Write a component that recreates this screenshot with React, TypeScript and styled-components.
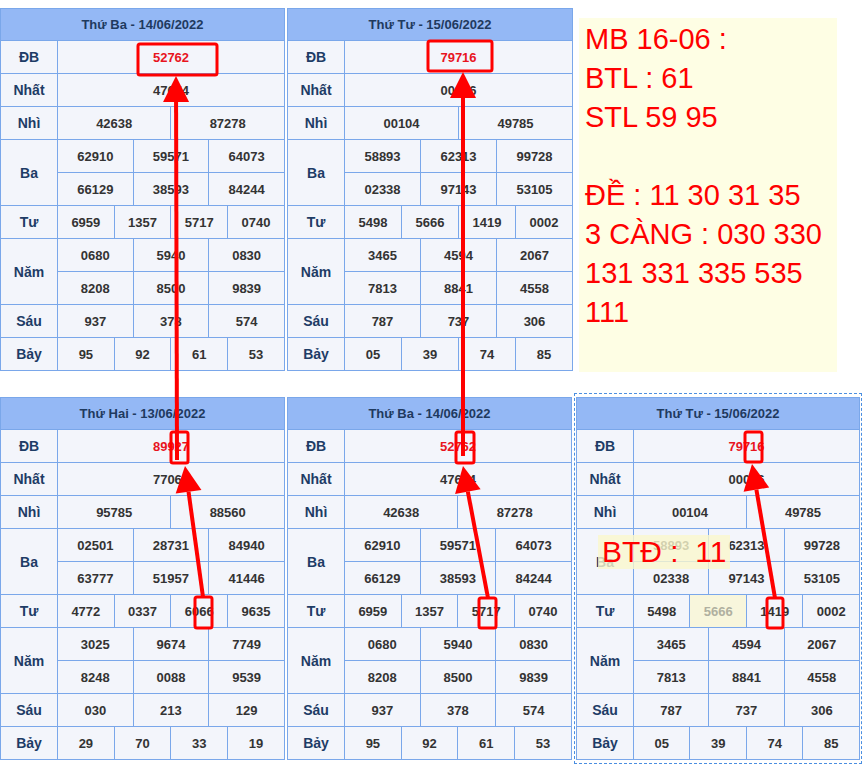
import React from "react";
import styled, { createGlobalStyle } from "styled-components";

const Global = createGlobalStyle`
  body { margin: 0; font-family: "Liberation Sans", Arial, sans-serif; background: #fff; }
`;

const Page = styled.div`
  position: relative;
  width: 862px;
  height: 764px;
  overflow: hidden;
`;
const Row = styled.div<{ $top: number }>`
  display: flex;
  align-items: flex-start;
  gap: 2px;
  padding-top: ${(p) => p.$top}px;
`;
const Table = styled.table<{ $w: number }>`
  width: ${(p) => p.$w}px;
  border-collapse: collapse;
  table-layout: fixed;
  background: #f3f5fb;
  border: 1px solid #7aa7ea;
  font-size: 13px;
`;
const Head = styled.th`
  height: 31px;
  padding: 0;
  background: #94b8f5;
  color: #1f3a5f;
  font-size: 13px;
  font-weight: bold;
  border: 1px solid #7aa7ea;
`;
const Label = styled.td`
  height: 32px;
  padding: 0;
  text-align: center;
  font-weight: bold;
  color: #1e3c66;
  font-size: 14px;
  border: 1px solid #7aa7ea;
`;
const Cell = styled.td<{ $red?: boolean; $dim?: boolean }>`
  height: 32px;
  padding: 0;
  text-align: center;
  font-weight: bold;
  color: ${(p) => (p.$red ? "#e8141e" : p.$dim ? "#b0b0a0" : "#333")};
  background: ${(p) => (p.$dim ? "#f8f6dc" : "transparent")};
  border: 1px solid #7aa7ea;
`;
const Note = styled.div`
  margin-left: 4px;
  margin-top: 10px;
  width: 258px;
  height: 354px;
  background: #fefee4;
  color: #f00;
  font-size: 29px;
  line-height: 39px;
  padding: 2px 0 0 6px;
  box-sizing: border-box;
  white-space: pre;
`;
const Selection = styled.div`
  border: 1px dashed #4a8ee0;
  padding: 3px 1px;
  margin-top: -4px;
`;
const Overlay = styled.svg`
  position: absolute;
  left: 0;
  top: 0;
  pointer-events: none;
`;
const BtdLabel = styled.div`
  position: absolute;
  left: 598px;
  top: 535px;
  color: #f00;
  font-size: 30px;
  white-space: pre;
  background: rgba(250, 248, 205, 0.8);
  padding: 0 4px;
`;

type D = { title: string; db: string; nhat: string; nhi: string[]; ba: string[]; tu: string[]; nam: string[]; sau: string[]; bay: string[]; dim?: string };

const Lotto = ({ d, w }: { d: D; w: number }) => {
  const c = (v: string, span: number) => (
    <Cell colSpan={span} $dim={d.dim === v}>{v}</Cell>
  );
  return (
    <Table $w={w}>
      <colgroup>
        <col style={{ width: 57 }} />
        {Array.from({ length: 12 }).map((_, i) => <col key={i} />)}
      </colgroup>
      <tbody>
        <tr><Head colSpan={13}>{d.title}</Head></tr>
        <tr><Label>ĐB</Label><Cell colSpan={12} $red>{d.db}</Cell></tr>
        <tr><Label>Nhất</Label>{c(d.nhat, 12)}</tr>
        <tr><Label>Nhì</Label>{d.nhi.map((v) => c(v, 6))}</tr>
        <tr><Label rowSpan={2}>Ba</Label>{d.ba.slice(0, 3).map((v) => c(v, 4))}</tr>
        <tr>{d.ba.slice(3).map((v) => c(v, 4))}</tr>
        <tr><Label>Tư</Label>{d.tu.map((v) => c(v, 3))}</tr>
        <tr><Label rowSpan={2}>Năm</Label>{d.nam.slice(0, 3).map((v) => c(v, 4))}</tr>
        <tr>{d.nam.slice(3).map((v) => c(v, 4))}</tr>
        <tr><Label>Sáu</Label>{d.sau.map((v) => c(v, 4))}</tr>
        <tr><Label>Bảy</Label>{d.bay.map((v) => c(v, 3))}</tr>
      </tbody>
    </Table>
  );
};

const t14: D = { title: "Thứ Ba - 14/06/2022", db: "52762", nhat: "47674", nhi: ["42638", "87278"], ba: ["62910", "59571", "64073", "66129", "38593", "84244"], tu: ["6959", "1357", "5717", "0740"], nam: ["0680", "5940", "0830", "8208", "8500", "9839"], sau: ["937", "378", "574"], bay: ["95", "92", "61", "53"] };
const t15: D = { title: "Thứ Tư - 15/06/2022", db: "79716", nhat: "00016", nhi: ["00104", "49785"], ba: ["58893", "62313", "99728", "02338", "97143", "53105"], tu: ["5498", "5666", "1419", "0002"], nam: ["3465", "4594", "2067", "7813", "8841", "4558"], sau: ["787", "737", "306"], bay: ["05", "39", "74", "85"] };
const t13: D = { title: "Thứ Hai - 13/06/2022", db: "89927", nhat: "77064", nhi: ["95785", "88560"], ba: ["02501", "28731", "84940", "63777", "51957", "41446"], tu: ["4772", "0337", "6066", "9635"], nam: ["3025", "9674", "7749", "8248", "0088", "9539"], sau: ["030", "213", "129"], bay: ["29", "70", "33", "19"] };

const arrow = (x1: number, y1: number, x2: number, y2: number) => {
  const a = Math.atan2(y2 - y1, x2 - x1);
  const L = 26, W = 13;
  const bx = x2 - L * Math.cos(a), by = y2 - L * Math.sin(a);
  const px = -Math.sin(a) * W, py = Math.cos(a) * W;
  return (
    <g>
      <line x1={x1} y1={y1} x2={bx} y2={by} stroke="#f00" strokeWidth={4} />
      <polygon points={`${x2},${y2} ${bx + px},${by + py} ${bx - px},${by - py}`} fill="#f00" />
    </g>
  );
};
const box = (x: number, y: number, w: number, h: number) => (
  <rect x={x} y={y} width={w} height={h} fill="none" stroke="#f00" strokeWidth={3} rx={2} />
);

export default function App() {
  return (
    <Page>
      <Global />
      <Row $top={8}>
        <Lotto d={t14} w={285} />
        <Lotto d={t15} w={286} />
        <Note>{"MB 16-06 :\nBTL : 61\nSTL 59 95\n\nĐỀ : 11 30 31 35\n3 CÀNG : 030 330\n131 331 335 535\n111"}</Note>
      </Row>
      <Row $top={25}>
        <Lotto d={t13} w={285} />
        <Lotto d={t14} w={285} />
        <Selection><Lotto d={{ ...t15, dim: "5666" }} w={284} /></Selection>
      </Row>
      <BtdLabel>{"BTĐ :  11"}</BtdLabel>
      <Overlay width={862} height={764}>
        {box(138, 44, 79, 31)}
        {arrow(177, 460, 176, 76)}
        {box(428, 41, 64, 30)}
        {arrow(463, 456, 463, 72)}
        {box(171, 432, 17, 31)}
        {box(195, 597, 17, 31)}
        {arrow(203, 597, 185, 466)}
        {box(456, 432, 18, 31)}
        {box(479, 598, 17, 30)}
        {arrow(488, 598, 463, 466)}
        {box(745, 432, 17, 30)}
        {box(767, 598, 16, 30)}
        {arrow(775, 598, 752, 464)}
      </Overlay>
    </Page>
  );
}
